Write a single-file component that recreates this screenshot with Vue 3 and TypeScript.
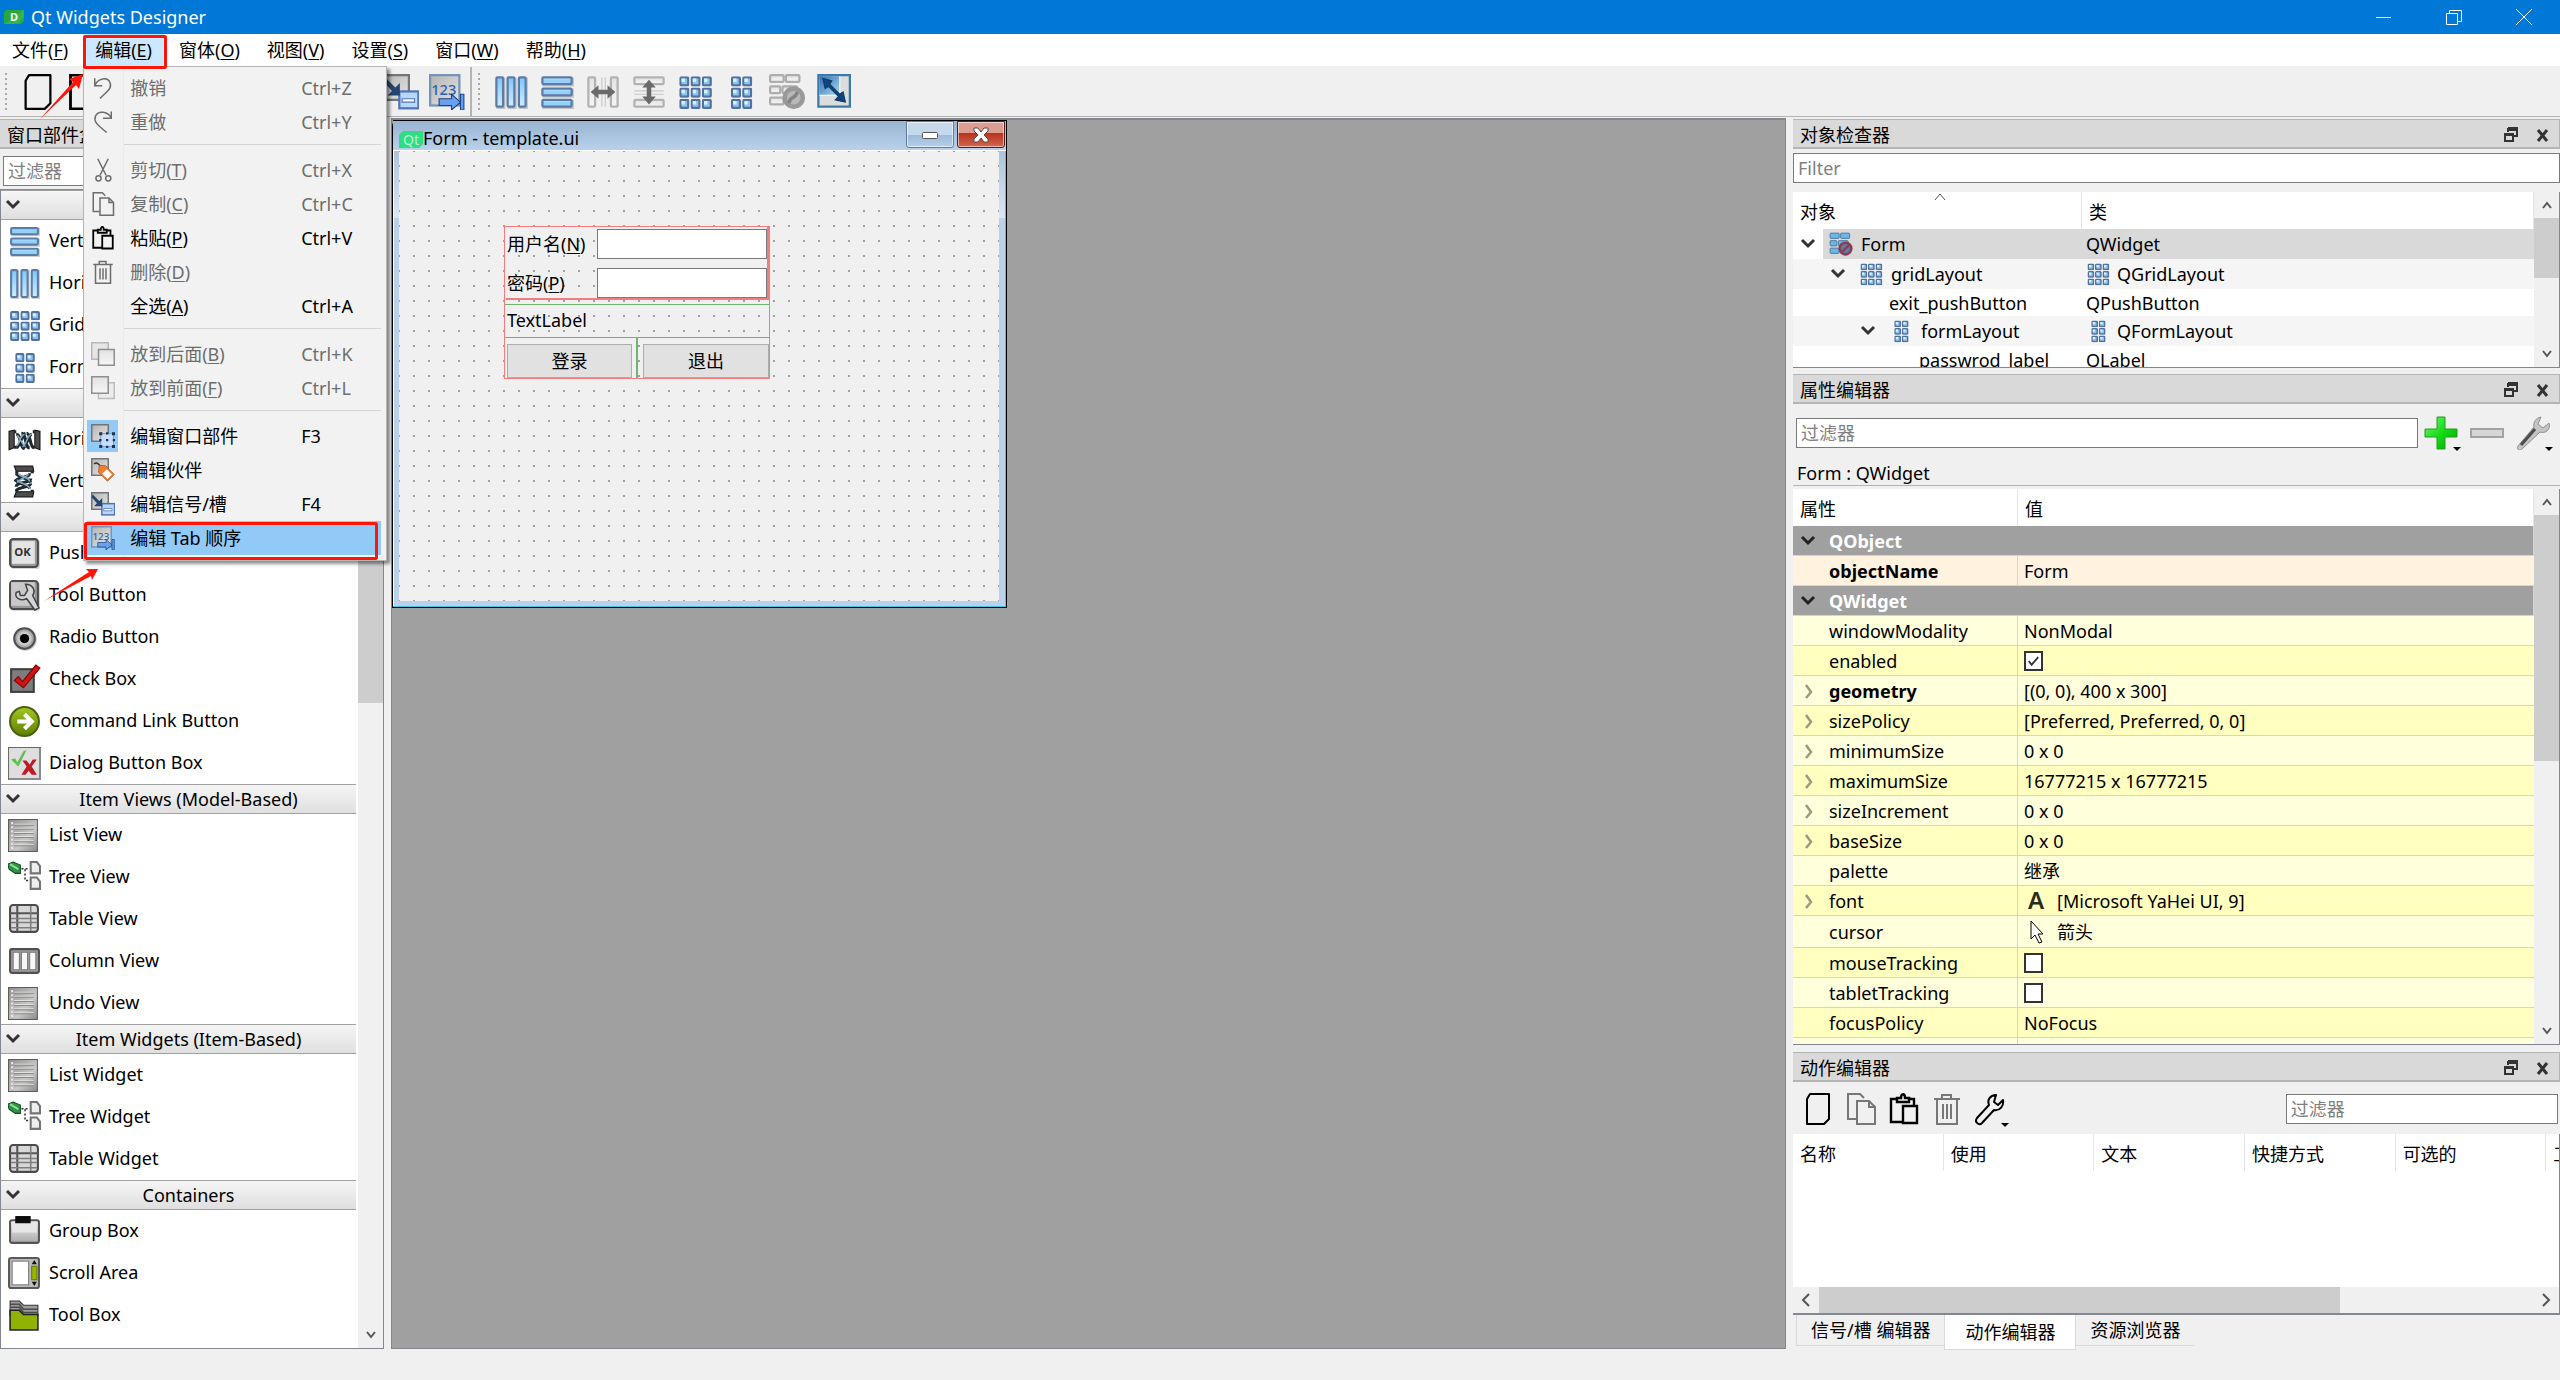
<script setup lang="ts">
import { ref } from 'vue'

interface MenuEntry {
  text?: string
  key?: string
  shortcut?: string
  icon?: string
  disabled?: boolean
  checked?: boolean
  active?: boolean
  separator?: boolean
}

interface Property {
  name: string
  value?: string
  kind?: 'group' | 'check'
  on?: boolean
  bold?: boolean
  expandable?: boolean
  icon?: string
  tone: string
}

const menus = [
  { text: '文件', key: 'F' },
  { text: '编辑', key: 'E' },
  { text: '窗体', key: 'O' },
  { text: '视图', key: 'V' },
  { text: '设置', key: 'S' },
  { text: '窗口', key: 'W' },
  { text: '帮助', key: 'H' },
]

const editMenu: MenuEntry[] = [
  { text: '撤销', shortcut: 'Ctrl+Z', icon: 'undo', disabled: true },
  { text: '重做', shortcut: 'Ctrl+Y', icon: 'redo', disabled: true },
  { separator: true },
  { text: '剪切', key: 'T', shortcut: 'Ctrl+X', icon: 'cut', disabled: true },
  { text: '复制', key: 'C', shortcut: 'Ctrl+C', icon: 'copy', disabled: true },
  { text: '粘贴', key: 'P', shortcut: 'Ctrl+V', icon: 'paste' },
  { text: '删除', key: 'D', icon: 'trash', disabled: true },
  { text: '全选', key: 'A', shortcut: 'Ctrl+A' },
  { separator: true },
  { text: '放到后面', key: 'B', shortcut: 'Ctrl+K', icon: 'toback', disabled: true },
  { text: '放到前面', key: 'F', shortcut: 'Ctrl+L', icon: 'tofront', disabled: true },
  { separator: true },
  { text: '编辑窗口部件', shortcut: 'F3', icon: 'widgets', checked: true },
  { text: '编辑伙伴', icon: 'buddy' },
  { text: '编辑信号/槽', shortcut: 'F4', icon: 'signal' },
  { text: '编辑 Tab 顺序', icon: 'taborder', active: true },
]

const layoutTools = ['hlay', 'vlay', 'hsplit', 'vsplit', 'grid', 'form', 'breaklay', 'adjust']

const widgetBox = [
  {
    title: 'Layouts',
    items: [
      ['Vertical Layout', 'vlay'],
      ['Horizontal Layout', 'hlay'],
      ['Grid Layout', 'grid'],
      ['Form Layout', 'form'],
    ],
  },
  {
    title: 'Spacers',
    items: [
      ['Horizontal Spacer', 'hspacer'],
      ['Vertical Spacer', 'vspacer'],
    ],
  },
  {
    title: 'Buttons',
    items: [
      ['Push Button', 'push'],
      ['Tool Button', 'tool'],
      ['Radio Button', 'radio'],
      ['Check Box', 'check'],
      ['Command Link Button', 'command'],
      ['Dialog Button Box', 'dialog'],
    ],
  },
  {
    title: 'Item Views (Model-Based)',
    items: [
      ['List View', 'list'],
      ['Tree View', 'tree'],
      ['Table View', 'table'],
      ['Column View', 'column'],
      ['Undo View', 'list'],
    ],
  },
  {
    title: 'Item Widgets (Item-Based)',
    items: [
      ['List Widget', 'list'],
      ['Tree Widget', 'tree'],
      ['Table Widget', 'table'],
    ],
  },
  {
    title: 'Containers',
    items: [
      ['Group Box', 'group'],
      ['Scroll Area', 'scrollarea'],
      ['Tool Box', 'toolbox'],
    ],
  },
]

const objects = [
  { name: 'Form', cls: 'QWidget', depth: 0, open: true, icon: 'breaklay-color', selected: true },
  { name: 'gridLayout', cls: 'QGridLayout', depth: 1, open: true, icon: 'grid', clsIcon: 'grid' },
  { name: 'exit_pushButton', cls: 'QPushButton', depth: 2 },
  { name: 'formLayout', cls: 'QFormLayout', depth: 2, open: true, icon: 'form', clsIcon: 'form' },
  { name: 'passwrod_label', cls: 'QLabel', depth: 3 },
]

const properties: Property[] = [
  { name: 'QObject', kind: 'group', tone: 'group' },
  { name: 'objectName', value: 'Form', bold: true, tone: 'peach' },
  { name: 'QWidget', kind: 'group', tone: 'group' },
  { name: 'windowModality', value: 'NonModal', tone: 'light' },
  { name: 'enabled', kind: 'check', on: true, tone: 'deep' },
  { name: 'geometry', value: '[(0, 0), 400 x 300]', bold: true, expandable: true, tone: 'light' },
  { name: 'sizePolicy', value: '[Preferred, Preferred, 0, 0]', expandable: true, tone: 'deep' },
  { name: 'minimumSize', value: '0 x 0', expandable: true, tone: 'light' },
  { name: 'maximumSize', value: '16777215 x 16777215', expandable: true, tone: 'deep' },
  { name: 'sizeIncrement', value: '0 x 0', expandable: true, tone: 'light' },
  { name: 'baseSize', value: '0 x 0', expandable: true, tone: 'deep' },
  { name: 'palette', value: '继承', tone: 'light' },
  { name: 'font', value: '[Microsoft YaHei UI, 9]', expandable: true, icon: 'fontglyph', tone: 'deep' },
  { name: 'cursor', value: '箭头', icon: 'pointer', tone: 'light' },
  { name: 'mouseTracking', kind: 'check', on: false, tone: 'deep' },
  { name: 'tabletTracking', kind: 'check', on: false, tone: 'light' },
  { name: 'focusPolicy', value: 'NoFocus', tone: 'deep' },
]

const actionColumns = ['名称', '使用', '文本', '快捷方式', '可选的', '工具提示']
const tabs = ['信号/槽 编辑器', '动作编辑器', '资源浏览器']
const currentTab = ref(1)
</script>

<template>
  <div class="app">
    <svg class="sprite" width="0" height="0" aria-hidden="true">
      <defs>
        <linearGradient id="g-blue" x1="0" y1="0" x2="0" y2="1">
          <stop offset="0" stop-color="#dff4ff" /><stop offset="0.4" stop-color="#8ed2fa" /><stop offset="1" stop-color="#a4cdf0" />
        </linearGradient>
        <linearGradient id="g-blue-h" x1="0" y1="0" x2="0" y2="1">
          <stop offset="0" stop-color="#7cc8fa" /><stop offset="1" stop-color="#d2ecfd" />
        </linearGradient>
        <linearGradient id="g-grey" x1="0" y1="0" x2="0" y2="1">
          <stop offset="0" stop-color="#f4f4f4" /><stop offset="1" stop-color="#a9a9a9" />
        </linearGradient>
        <linearGradient id="g-pale" x1="0" y1="0" x2="0" y2="1">
          <stop offset="0" stop-color="#e2e2e2" /><stop offset="1" stop-color="#f6f6f6" />
        </linearGradient>
        <linearGradient id="g-panel" x1="0" y1="0" x2="1" y2="1">
          <stop offset="0" stop-color="#b4b4b4" /><stop offset="1" stop-color="#e6e6e6" />
        </linearGradient>
        <linearGradient id="g-list" x1="0" y1="0" x2="1" y2="1">
          <stop offset="0" stop-color="#8f8f8f" /><stop offset="0.6" stop-color="#c8c8c6" /><stop offset="1" stop-color="#8a8a88" />
        </linearGradient>
        <linearGradient id="g-green" x1="0" y1="0" x2="0" y2="1">
          <stop offset="0" stop-color="#a4c520" /><stop offset="1" stop-color="#5f7f00" />
        </linearGradient>
        <linearGradient id="g-plus" x1="0" y1="0" x2="1" y2="1">
          <stop offset="0" stop-color="#7df57d" /><stop offset="0.5" stop-color="#15dc15" /><stop offset="1" stop-color="#00a800" />
        </linearGradient>
        <linearGradient id="g-adjust" x1="0" y1="0" x2="1" y2="1">
          <stop offset="0" stop-color="#2f6fb4" /><stop offset="1" stop-color="#a7dcf3" />
        </linearGradient>
      </defs>

      <symbol id="vlay" viewBox="0 0 32 32">
        <path d="M3 3h28v8H3zM3 13h28v8H3zM3 23h28v8H3z" fill="#00000030" />
        <g fill="url(#g-blue)" stroke="#5b7ba8" stroke-width="2">
          <rect x="3" y="3" width="26" height="6" rx="1" /><rect x="3" y="13" width="26" height="6" rx="1" /><rect x="3" y="23" width="26" height="6" rx="1" />
        </g>
      </symbol>
      <symbol id="hlay" viewBox="0 0 32 32">
        <path d="M3 3h8v28H3zM13 3h8v28h-8zM23 3h8v28h-8z" fill="#00000030" />
        <g fill="url(#g-blue-h)" stroke="#5b7ba8" stroke-width="2">
          <rect x="3" y="3" width="6" height="26" rx="1" /><rect x="13" y="3" width="6" height="26" rx="1" /><rect x="23" y="3" width="6" height="26" rx="1" />
        </g>
      </symbol>
      <symbol id="cell" viewBox="0 0 9 9">
        <rect x="1" y="1" width="8" height="8" fill="#00000030" /><rect x="1" y="1" width="7" height="7" rx="1" fill="#8cc4ee" stroke="#52719f" stroke-width="2" /><path d="M2 2h3v3H2z" fill="#d4f1fd" />
      </symbol>
      <symbol id="grid" viewBox="0 0 32 32">
        <use v-for="n in 9" :key="n" href="#cell" :x="2 + ((n - 1) % 3) * 10" :y="2 + Math.floor((n - 1) / 3) * 10" width="9" height="9" />
      </symbol>
      <symbol id="form" viewBox="0 0 32 32">
        <use v-for="n in 6" :key="n" href="#cell" :x="7 + ((n - 1) % 2) * 10" :y="2 + Math.floor((n - 1) / 2) * 10" width="9" height="9" />
      </symbol>
      <symbol id="hsplit" viewBox="0 0 32 32">
        <g fill="url(#g-pale)" stroke="#b2b2b2" stroke-width="2"><rect x="3" y="3" width="6" height="26" rx="1" /><rect x="23" y="3" width="6" height="26" rx="1" /></g>
        <path d="M15 3v26M18 3v26" stroke="#c6c6c6" /><path d="M5 16l7-6v4h8v-4l7 6-7 6v-4h-8v4z" fill="#6a6a6a" />
      </symbol>
      <symbol id="vsplit" viewBox="0 0 32 32">
        <g fill="url(#g-pale)" stroke="#b2b2b2" stroke-width="2"><rect x="3" y="3" width="26" height="6" rx="1" /><rect x="3" y="23" width="26" height="6" rx="1" /></g>
        <path d="M3 15h26M3 18h26" stroke="#c6c6c6" /><path d="M16 5l6 7h-4v8h4l-6 7-6-7h4v-8h-4z" fill="#6a6a6a" />
      </symbol>
      <symbol id="breaklay" viewBox="0 0 32 32">
        <g fill="url(#g-pale)" stroke="#adadad" stroke-width="2">
          <rect x="1" y="1" width="12" height="6" rx="1" /><rect x="15" y="1" width="12" height="6" rx="1" />
          <rect x="1" y="11" width="9" height="6" rx="1" /><rect x="12" y="11" width="13" height="6" rx="1" /><rect x="1" y="21" width="12" height="6" rx="1" />
        </g>
        <circle cx="22" cy="21" r="10" fill="#999" /><circle cx="22" cy="21" r="6" fill="#b8b8b8" /><path d="M18 26c0-7 6-3 7-10" stroke="#848484" stroke-width="3" fill="none" />
      </symbol>
      <symbol id="breaklay-color" viewBox="0 0 32 32">
        <g fill="#6cb6e8" stroke="#35628f">
          <rect x="1.500" y="1.500" width="12" height="7" rx="1" /><rect x="15.500" y="1.500" width="12" height="7" rx="1" />
          <rect x="1.500" y="11.500" width="9" height="7" rx="1" /><rect x="12.500" y="11.500" width="13" height="7" rx="1" /><rect x="1.500" y="21.500" width="12" height="7" rx="1" />
        </g>
        <circle cx="22" cy="22" r="9.500" fill="#843f55" /><circle cx="22" cy="22" r="6" fill="#5f7ca5" /><path d="M17 27l10-10" stroke="#843f55" stroke-width="3" />
      </symbol>
      <symbol id="adjust" viewBox="0 0 32 32">
        <rect x="3" y="1" width="28" height="28" fill="#dcdcdc" stroke="#3a78b0" stroke-width="2" /><path d="M4 2h18v17H4z" fill="url(#g-adjust)" /><path d="M22 2v17H4" fill="none" stroke="#f6f6f6" />
        <path d="M7 4l8 2-2 3 9 9 3-2 2 9-9-2 3-3-9-9-3 2z" fill="#114478" stroke="#0d3a68" />
      </symbol>

      <symbol id="page" viewBox="0 0 32 32"><path d="M8 1h19v25l-5 5H5V6z" fill="none" stroke="currentColor" stroke-width="2" stroke-linejoin="round" /></symbol>
      <symbol id="openfile" viewBox="0 0 32 32"><path d="M4 1h16l8 8v22H4zM20 1v8h8" fill="none" stroke="currentColor" stroke-width="2.500" /></symbol>
      <symbol id="undo" viewBox="0 0 32 32"><path d="M5 3v10h10M5 13C9 3 22 1 25 8c4 8-3 12-13 22" fill="none" stroke="currentColor" stroke-width="2" /></symbol>
      <symbol id="redo" viewBox="0 0 32 32"><path d="M27 2v9H16M27 11C23 2 10 0 6 8c-3 8 3 12 15 22" fill="none" stroke="currentColor" stroke-width="2" /></symbol>
      <symbol id="cut" viewBox="0 0 32 32"><path d="M9 1l11 22M23 1L12 23" fill="none" stroke="currentColor" stroke-width="2" /><circle cx="10" cy="27" r="3.500" fill="none" stroke="currentColor" stroke-width="2" /><circle cx="23" cy="27" r="3.500" fill="none" stroke="currentColor" stroke-width="2" /></symbol>
      <symbol id="copy" viewBox="0 0 32 32"><path d="M12 26H3V1h12l4 4M12 8h12l6 6v17H12zM24 8v6h6" fill="none" stroke="currentColor" stroke-width="2" /></symbol>
      <symbol id="paste" viewBox="0 0 32 32"><path d="M15 29H3V6h6M20 6h6v6M9 5h4c0-5 4-5 4 0h4v4H9zM15 13h14v17H15z" fill="none" stroke="currentColor" stroke-width="2.400" /></symbol>
      <symbol id="trash" viewBox="0 0 32 32"><path d="M3 6h26M11 6V2h9v4M6 7v24h20V7M12 11v15M16 11v15M20 11v15" fill="none" stroke="currentColor" stroke-width="2" /></symbol>
      <symbol id="wrench" viewBox="0 0 32 32"><path d="M22 2c-6 0-9 5-7 10L3 25c-3 4 2 8 5 5l12-13c6 1 10-4 9-10l-5 5-4-3z" fill="none" stroke="currentColor" stroke-width="2" stroke-linejoin="round" /></symbol>
      <symbol id="toback" viewBox="0 0 32 32"><rect x="1" y="1" width="22" height="22" fill="#e6e6e6" stroke="#b8b8b8" stroke-width="2" /><rect x="10" y="10" width="21" height="21" fill="url(#g-pale)" stroke="#8f8f8f" stroke-width="2" /></symbol>
      <symbol id="tofront" viewBox="0 0 32 32"><rect x="10" y="9" width="21" height="21" fill="#ececec" stroke="#bdbdbd" stroke-width="2" /><rect x="1" y="1" width="22" height="22" fill="url(#g-pale)" stroke="#8f8f8f" stroke-width="2" /></symbol>
      <symbol id="widgets" viewBox="0 0 32 32">
        <rect x="1" y="1" width="22" height="22" fill="url(#g-panel)" stroke="#747474" stroke-width="2" /><rect x="13" y="13" width="17" height="17" fill="#c3dcff" stroke="#6d88b8" />
        <path d="M11 11h4v4h-4zM20 11h3v3h-3zM28 11h4v4h-4zM11 20h3v3h-3zM20 20h3v3h-3zM29 20h3v3h-3zM11 28h4v4h-4zM20 29h3v3h-3zM28 28h4v4h-4z" fill="#1d3350" />
      </symbol>
      <symbol id="buddy" viewBox="0 0 32 32">
        <rect x="1" y="1" width="22" height="22" fill="url(#g-panel)" stroke="#747474" stroke-width="2" /><path d="M4 8c4-3 7 0 9 4" fill="none" stroke="#333" stroke-width="2" />
        <path d="M11 10h8l12 12-9 9-12-12z" fill="#ef7f31" stroke="#a65218" /><path d="M21 15l7 7-6 6-7-7z" fill="#fff" />
      </symbol>
      <symbol id="signal" viewBox="0 0 32 32">
        <rect x="1" y="1" width="22" height="22" fill="url(#g-panel)" stroke="#747474" stroke-width="2" /><rect x="14.500" y="15.500" width="17" height="15" fill="#b9d6fb" stroke="#4f75b4" stroke-width="2" /><path d="M17 22h11v3H17z" fill="#fff" stroke="#4f75b4" />
        <path d="M2 3l9 9 4-4v11H4l4-4-7-8z" fill="#27466f" />
      </symbol>
      <symbol id="taborder" viewBox="0 0 32 32">
        <rect x="1" y="1" width="26" height="27" fill="url(#g-panel)" stroke="#7793b5" stroke-width="2" /><text x="2" y="19" font-size="13" font-weight="500" fill="#2c62b4">123</text>
        <path d="M9 22h11v-4l8 7-8 7v-4H9zM28 18h3v14h-3z" fill="#6da0ea" stroke="#1c4488" />
      </symbol>
      <symbol id="save" viewBox="0 0 32 32"><path d="M3 2h22l5 5v23H3zM9 2v9h12V2M8 30V18h16v12" fill="none" stroke="currentColor" stroke-width="2" /></symbol>

      <symbol id="hspacer" viewBox="0 0 32 32">
        <path d="M8 11c5 0 3 13 8 14M13 10c5 0 3 14 8 14M18 10c4 0 3 13 7 14M8 24c4-1 5-13 9-14M14 25c4-1 5-13 9-14" stroke="#1d2830" stroke-width="3" fill="none" /><path d="M8 22c4-1 3-10 8-11M14 23c4-1 4-11 9-12M9 12c3 3 5 9 8 11" stroke="#86abc0" stroke-width="1.500" fill="none" />
        <path d="M1 8l5-1v17l-5 2zM31 8l-5-1v17l5 2z" fill="#4c4c4c" stroke="#111" /><path d="M6 7h2v3H6zM6 22h2v3H6zM24 7h2v3h-2zM24 22h2v3h-2z" fill="#222" />
      </symbol>
      <symbol id="vspacer" viewBox="0 0 32 32"><use href="#hspacer" width="32" height="32" transform="rotate(90 16 16)" /></symbol>
      <symbol id="push" viewBox="0 0 32 32"><rect x="3" y="3" width="28" height="28" rx="3" fill="#00000028" /><rect x="2" y="2" width="27" height="27" rx="3" fill="#9a9a9a" stroke="#4c4c4c" stroke-width="2" /><rect x="4" y="4" width="22" height="22" fill="#e4e4e4" /><text x="6" y="18" font-size="11" font-weight="bold" fill="#333">OK</text></symbol>
      <symbol id="tool" viewBox="0 0 32 32">
        <rect x="3" y="3" width="28" height="28" rx="3" fill="#00000028" /><rect x="2" y="2" width="27" height="27" rx="3" fill="#9a9a9a" stroke="#4c4c4c" stroke-width="2" /><rect x="3" y="3" width="23" height="23" fill="#c9c9c9" />
        <path d="M17 5c7 0 10 6 7 11l6 12-4 2-8-11C12 22 6 18 8 13l3-1 1 4 4 0 3-5z" fill="#d4d4da" stroke="#444" stroke-width="1.500" />
      </symbol>
      <symbol id="radio" viewBox="0 0 32 32"><circle cx="17" cy="18" r="11" fill="#00000030" /><circle cx="16" cy="17" r="10" fill="#a9a9a9" stroke="#505050" stroke-width="2" /><circle cx="16" cy="17" r="7" fill="#c9c9c9" /><circle cx="16" cy="17" r="4.500" fill="#000" /></symbol>
      <symbol id="check" viewBox="0 0 32 32"><rect x="3" y="6" width="22" height="22" fill="#7d7d7d" stroke="#3e3e3e" stroke-width="2" /><path d="M6 17l4-4 4 5L27 2l4 3-16 19z" fill="#cf1414" stroke="#7c0505" /></symbol>
      <symbol id="command" viewBox="0 0 32 32"><circle cx="16" cy="16" r="14" fill="url(#g-green)" stroke="#4b6112" stroke-width="2" /><path d="M9 16h13M16 9l7 7-7 7" fill="none" stroke="#fff" stroke-width="4" /></symbol>
      <symbol id="dialog" viewBox="0 0 32 32"><rect x="0.500" y="0.500" width="31" height="31" fill="#dedede" stroke="#6b6b6b" /><path d="M1 31h30V1" fill="none" stroke="#8b8b8b" stroke-width="2" /><path d="M3 12l4-1 2 4 6-11 3-1-8 16z" fill="#5fc04c" /><path d="M14 13h4l3 4 3-5h4l-5 7 5 8h-5l-3-4-3 4h-4l5-8z" fill="#c01c28" /></symbol>
      <symbol id="list" viewBox="0 0 32 32">
        <rect x="0.500" y="0.500" width="28" height="31" fill="url(#g-list)" stroke="#5c5c5c" />
        <path d="M6 5h19M6 9h19M6 13h19M6 17h19M6 21h19M6 25h19" stroke="#e2e2e0" /><path d="M6 6h19M6 10h19M6 14h19M6 18h19M6 22h19M6 26h19" stroke="#8a8a8a" /><path d="M4 3v26" stroke="#e6e6e6" stroke-width="2" stroke-dasharray="2 2" />
      </symbol>
      <symbol id="tree" viewBox="0 0 32 32">
        <path d="M0 3l5-2 7 3v8l-5 0-6-4z" fill="#2f9440" stroke="#0e4b1c" /><path d="M2 3l8 5" stroke="#8fdc9a" stroke-width="2" />
        <path d="M13 7.500h8M16.500 8v11h5" stroke="#333" stroke-width="1.500" stroke-dasharray="2 2" fill="none" />
        <g fill="#eee" stroke="#747474" stroke-width="2"><path d="M22 1h6l3 4v7h-9zM22 16h6l3 4v7h-9z" /></g>
      </symbol>
      <symbol id="table" viewBox="0 0 32 32"><rect x="2" y="2" width="27" height="26" rx="3" fill="#d8d8d8" stroke="#4a4a4a" stroke-width="2" /><path d="M2 10h27M9 2v26" stroke="#555" stroke-width="2" /><path d="M3 15h25M3 19h25M3 24h25M22 3v24" stroke="#7d7d7d" stroke-width="1.500" /></symbol>
      <symbol id="column" viewBox="0 0 32 32"><rect x="2" y="4" width="28" height="23" rx="2" fill="#9e9e9e" stroke="#4f4f4f" stroke-width="2" /><path d="M5 7h6v17H5zM13 7h6v17h-6zM21 7h6v17h-6z" fill="#f7f7f7" stroke="#777" /></symbol>
      <symbol id="group" viewBox="0 0 32 32"><rect x="2" y="5" width="28" height="22" rx="2" fill="url(#g-grey)" stroke="#555" stroke-width="2" /><path d="M4 7h24v10H4z" fill="#e6e6e6" /><path d="M7 1h15v7H7z" fill="#0c0c0c" /></symbol>
      <symbol id="scrollarea" viewBox="0 0 32 32"><rect x="1" y="1" width="29" height="29" rx="2" fill="#bdbdbd" stroke="#595959" stroke-width="2" /><rect x="4" y="4" width="16" height="23" fill="#fff" stroke="#777" /><path d="M23 9h5v13h-5z" fill="#93b800" stroke="#5d7600" /><path d="M23 7l2.500-4L28 7zM23 24l2.500 4 2.500-4z" fill="#111" /></symbol>
      <symbol id="toolbox" viewBox="0 0 32 32"><path d="M2 2h9l4 4h14v10H2z" fill="#9d9d9d" stroke="#333" /><path d="M2 5h9l4 5h14M2 8h9l4 5h14" fill="none" stroke="#4a4a4a" stroke-width="1.500" /><path d="M2 11h9l4 4h14v15H2z" fill="#8fb300" stroke="#222" stroke-width="1.500" /></symbol>

      <symbol id="fontglyph" viewBox="0 0 24 24"><text x="4" y="20" font-size="24" font-weight="600" fill="#2b2b1c">A</text></symbol>
      <symbol id="pointer" viewBox="0 0 24 24"><path d="M7 1v18l4-4 4 8 3-1-4-8h5z" fill="#fff" stroke="#000" /></symbol>
      <symbol id="plus" viewBox="0 0 34 34"><path d="M13 1h8v12h12v8H21v12h-8V21H1v-8h12z" fill="url(#g-plus)" stroke="#1f9f1f" /></symbol>
      <symbol id="minus" viewBox="0 0 34 34"><rect x="1" y="13" width="32" height="8" fill="#d6d6d6" stroke="#a3a3a3" stroke-width="2" /></symbol>
      <symbol id="spanner" viewBox="0 0 34 34"><path d="M25 1l-3 7 5 4 6-5c2 6-3 11-9 9L6 33c-2 3-6 0-4-3L18 11c-1-5 2-9 7-10z" fill="#c4c4c4" stroke="#8f8f8f" /><path d="M5 29l14-16" stroke="#4c4c4c" stroke-width="3" /></symbol>
      <symbol id="chev-down" viewBox="0 0 16 16"><path d="M2 4l6 6 6-6" fill="none" stroke="currentColor" stroke-width="3" /></symbol>
      <symbol id="chev-right" viewBox="0 0 16 16"><path d="M6 2l5 7-5 6" fill="none" stroke="currentColor" stroke-width="2.500" /></symbol>
      <symbol id="arrow-down" viewBox="0 0 16 16"><path d="M4 5l4 5 4-5" fill="none" stroke="currentColor" stroke-width="2" /></symbol>
      <symbol id="arrow-up" viewBox="0 0 16 16"><path d="M4 11l4-5 4 5" fill="none" stroke="currentColor" stroke-width="2" /></symbol>
      <symbol id="arrow-left" viewBox="0 0 16 16"><path d="M11 2L5 8l6 6" fill="none" stroke="currentColor" stroke-width="2" /></symbol>
      <symbol id="arrow-right" viewBox="0 0 16 16"><path d="M5 2l6 6-6 6" fill="none" stroke="currentColor" stroke-width="2" /></symbol>
      <symbol id="float" viewBox="0 0 16 16"><path d="M5 1h9v8h-4M5 1v4M5 3h9" fill="none" stroke="#333" stroke-width="2" /><path d="M2 7h8v7H2zM2 8h8" fill="none" stroke="#333" stroke-width="2" /></symbol>
      <symbol id="close" viewBox="0 0 16 16"><path d="M3 3l9 11M12 3L3 14" stroke="#333" stroke-width="3" /></symbol>
    </svg>

    <header class="titlebar">
      <svg class="logo" viewBox="0 0 20 14"><path d="M2 0h18v11l-3 3H0V3z" fill="#26a83c" /><path d="M20 0v7l-6 7H0z" fill="#3fc455" opacity="0.500" /><text x="6" y="11" font-size="11" font-weight="bold" fill="#fff">D</text></svg>
      <h1>Qt Widgets Designer</h1>
      <div class="window-buttons">
        <button type="button" aria-label="最小化"><svg viewBox="0 0 16 16"><path d="M0 8.500h15" stroke="#fff" /></svg></button>
        <button type="button" aria-label="还原"><svg viewBox="0 0 16 16"><path d="M.5 4.500h11v11H.5zM3.500 4V1.500h12v11H12" fill="none" stroke="#fff" /></svg></button>
        <button type="button" aria-label="关闭"><svg viewBox="0 0 16 16"><path d="M0 0l16 16M16 0L0 16" stroke="#fff" /></svg></button>
      </div>
    </header>

    <nav class="menubar">
      <div v-for="m in menus" :key="m.key" class="menu-slot">
        <button type="button" class="menu-title" :class="{ open: m.key === 'E' }">{{ m.text }}(<u>{{ m.key }}</u>)</button>
        <div v-if="m.key === 'E'" class="menu">
          <template v-for="(e, i) in editMenu" :key="i">
            <hr v-if="e.separator" />
            <button v-else type="button" class="entry" :class="{ active: e.active }" :disabled="e.disabled">
              <span class="entry-icon" :class="{ checked: e.checked }"><svg v-if="e.icon"><use :href="'#' + e.icon" /></svg></span>
              <span class="entry-text">{{ e.text }}<template v-if="e.key">(<u>{{ e.key }}</u>)</template></span>
              <span class="entry-key">{{ e.shortcut }}</span>
            </button>
          </template>
        </div>
      </div>
    </nav>

    <div class="toolbars">
      <div class="toolbar file-tools">
        <i class="handle"></i>
        <button type="button" aria-label="新建"><svg><use href="#page" /></svg></button>
        <button type="button" aria-label="打开"><svg><use href="#openfile" /></svg></button>
        <button type="button" aria-label="保存"><svg><use href="#save" /></svg></button>
        <span class="push-right"></span>
        <button type="button" aria-label="编辑信号/槽"><svg><use href="#signal" /></svg></button>
        <button type="button" aria-label="编辑 Tab 顺序"><svg><use href="#taborder" /></svg></button>
      </div>
      <div class="toolbar layout-tools">
        <i class="handle"></i>
        <button v-for="t in layoutTools" :key="t" type="button" :aria-label="t"><svg><use :href="'#' + t" /></svg></button>
      </div>
    </div>

    <main class="workspace">
      <aside class="left">
        <div class="dock-title"><h2>窗口部件盒</h2></div>
        <input class="field box-filter" type="text" placeholder="过滤器" aria-label="过滤窗口部件" />
        <div class="box">
          <div class="box-list">
            <section v-for="g in widgetBox" :key="g.title">
              <h3><svg class="chev"><use href="#chev-down" /></svg><span>{{ g.title }}</span></h3>
              <div v-for="it in g.items" :key="it[0]" class="box-item"><svg><use :href="'#' + it[1]" /></svg><span>{{ it[0] }}</span></div>
            </section>
          </div>
          <div class="vscroll">
            <svg><use href="#arrow-up" /></svg>
            <div class="track"><div class="thumb" style="height: 44%"></div></div>
            <svg><use href="#arrow-down" /></svg>
          </div>
        </div>
      </aside>

      <section class="mdi">
        <div class="child">
          <div class="child-title">
            <svg class="qt" viewBox="0 0 24 17"><path d="M4 0h20v13l-4 4H0V4z" fill="#2cde85" /><text x="4" y="14" font-size="14" fill="#bfeed6">Qt</text></svg>
            <span class="child-name">Form - template.ui</span>
            <button type="button" class="child-min" aria-label="最小化子窗口"><svg viewBox="0 0 18 18"><rect x="1.500" y="6.500" width="15" height="6" rx="1" fill="#fff" stroke="#555" /></svg></button>
            <button type="button" class="child-close" aria-label="关闭子窗口"><svg viewBox="0 0 18 18"><path d="M2 2h4l3 4 3-4h4v3l-4 4 4 4v3h-4l-3-4-3 4H2v-3l4-4-4-4z" fill="#fff" stroke="#5c4a4a" /></svg></button>
          </div>
          <div class="canvas">
            <form class="grid-layout" @submit.prevent>
              <div class="form-layout">
                <label for="user">用户名(<u>N</u>)</label><input id="user" type="text" />
                <label for="pass">密码(<u>P</u>)</label><input id="pass" type="password" />
              </div>
              <div class="text-label">TextLabel</div>
              <div class="form-buttons">
                <div><button type="button">登录</button></div>
                <div><button type="button">退出</button></div>
              </div>
            </form>
          </div>
        </div>
      </section>

      <aside class="right">
        <section class="inspector">
          <div class="dock-title"><h2>对象检查器</h2><button type="button" aria-label="浮动"><svg><use href="#float" /></svg></button><button type="button" aria-label="关闭"><svg><use href="#close" /></svg></button></div>
          <input class="field object-filter" type="text" placeholder="Filter" aria-label="过滤对象" />
          <div class="view">
            <div class="view-body">
              <table class="objects">
                <colgroup><col class="col-object" /><col /></colgroup>
                <thead><tr><th><svg class="sort" viewBox="0 0 12 8"><path d="M1 7l5-6 5 6" fill="none" stroke="#555" /></svg>对象</th><th>类</th></tr></thead>
                <tbody>
                  <tr v-for="o in objects" :key="o.name" :class="{ selected: o.selected, short: !o.icon }">
                    <td>
                      <div class="node">
                        <span v-for="d in o.depth" :key="d" class="indent"></span>
                        <span class="twist"><svg v-if="o.open"><use href="#chev-down" /></svg></span>
                        <span class="node-body"><svg v-if="o.icon"><use :href="'#' + o.icon" /></svg>{{ o.name }}</span>
                      </div>
                    </td>
                    <td><div class="node-class"><svg v-if="o.clsIcon"><use :href="'#' + o.clsIcon" /></svg>{{ o.cls }}</div></td>
                  </tr>
                </tbody>
              </table>
            </div>
            <div class="vscroll">
              <svg><use href="#arrow-up" /></svg>
              <div class="track"><div class="thumb" style="height: 49%"></div></div>
              <svg><use href="#arrow-down" /></svg>
            </div>
          </div>
        </section>

        <section class="editor">
          <div class="dock-title"><h2>属性编辑器</h2><button type="button" aria-label="浮动"><svg><use href="#float" /></svg></button><button type="button" aria-label="关闭"><svg><use href="#close" /></svg></button></div>
          <div class="prop-tools">
            <input class="field" type="text" placeholder="过滤器" aria-label="过滤属性" />
            <button type="button" class="drop" aria-label="添加动态属性"><svg><use href="#plus" /></svg></button>
            <button type="button" aria-label="删除动态属性"><svg><use href="#minus" /></svg></button>
            <button type="button" class="drop" aria-label="配置属性编辑器"><svg><use href="#spanner" /></svg></button>
          </div>
          <div class="target">Form : QWidget</div>
          <div class="view">
            <div class="view-body">
              <table class="props">
                <colgroup><col class="col-prop" /><col /></colgroup>
                <thead><tr><th>属性</th><th>值</th></tr></thead>
                <tbody>
                  <tr v-for="p in properties" :key="p.name" :class="[p.tone, { tall: p.name === 'cursor' }]">
                    <td :class="{ bold: p.bold }" :colspan="p.kind === 'group' ? 2 : 1">
                      <div class="prop-name">
                        <svg v-if="p.kind === 'group'"><use href="#chev-down" /></svg>
                        <svg v-else-if="p.expandable"><use href="#chev-right" /></svg>
                        <i v-else></i>
                        <label v-if="p.kind === 'check'" :for="'prop-' + p.name">{{ p.name }}</label>
                        <span v-else>{{ p.name }}</span>
                      </div>
                    </td>
                    <td v-if="p.kind !== 'group'">
                      <div class="prop-value">
                        <span v-if="p.kind === 'check'" class="tick">
                          <input :id="'prop-' + p.name" type="checkbox" :checked="p.on" />
                          <svg viewBox="0 0 20 20"><path d="M5 10l3 4 7-8" fill="none" stroke="#333" stroke-width="2" /></svg>
                        </span>
                        <svg v-if="p.icon" class="value-icon"><use :href="'#' + p.icon" /></svg>
                        {{ p.value }}
                      </div>
                    </td>
                  </tr>
                  <tr class="light" aria-hidden="true"><td></td><td></td></tr>
                </tbody>
              </table>
            </div>
            <div class="vscroll">
              <svg><use href="#arrow-up" /></svg>
              <div class="track"><div class="thumb" style="height: 49%"></div></div>
              <svg><use href="#arrow-down" /></svg>
            </div>
          </div>
        </section>

        <section class="actions">
          <div class="dock-title"><h2>动作编辑器</h2><button type="button" aria-label="浮动"><svg><use href="#float" /></svg></button><button type="button" aria-label="关闭"><svg><use href="#close" /></svg></button></div>
          <div class="action-tools">
            <button type="button" aria-label="新建动作"><svg><use href="#page" /></svg></button>
            <button type="button" class="dim" aria-label="复制动作"><svg><use href="#copy" /></svg></button>
            <button type="button" aria-label="粘贴动作"><svg><use href="#paste" /></svg></button>
            <button type="button" class="dim" aria-label="删除动作"><svg><use href="#trash" /></svg></button>
            <button type="button" class="drop" aria-label="配置"><svg><use href="#wrench" /></svg></button>
            <input class="field" type="text" placeholder="过滤器" aria-label="过滤动作" />
          </div>
          <div class="action-view">
            <div class="action-body">
              <table class="action-table">
                <thead><tr><th v-for="c in actionColumns" :key="c">{{ c }}</th></tr></thead>
              </table>
            </div>
            <div class="hscroll">
              <svg><use href="#arrow-left" /></svg>
              <div class="track"><div class="thumb" style="width: 73%"></div></div>
              <svg><use href="#arrow-right" /></svg>
            </div>
          </div>
          <div class="tabs">
            <button v-for="(t, i) in tabs" :key="t" type="button" :class="{ current: i === currentTab }" @click="currentTab = i">{{ t }}</button>
          </div>
        </section>
      </aside>
    </main>

    <footer class="status"></footer>

    <svg class="marks" width="400" height="620" aria-hidden="true">
      <g fill="none" stroke="#ff1408" stroke-width="3">
        <rect x="84.500" y="36.500" width="81" height="31" rx="1" />
        <rect x="85.500" y="523.500" width="291" height="35" rx="1" />
      </g>
      <path d="M40 119L73 82L69 79L83 74L79 89L76 85Z" fill="#ff1408" />
      <path d="M44 601L89 572L86 569L98 569L92 580L91 576Z" fill="#ff1408" />
    </svg>
  </div>
</template>

<style>
html,
body {
  margin: 0;
  height: 100%;
}
</style>

<style scoped>
.app {
  position: relative;
  display: flex;
  flex-direction: column;
  height: 100vh;
  overflow: hidden;
  background: #f0f0f0;
  color: #000;
  font-family: 'Noto Sans', 'Noto Sans CJK SC', sans-serif;
  font-size: 18px;
  line-height: 26px;
  white-space: nowrap;
}
.app *,
.app *::before,
.app *::after {
  box-sizing: border-box;
}
.sprite,
.marks {
  position: absolute;
  top: 0;
  left: 0;
  pointer-events: none;
}
.marks {
  z-index: 20;
}
svg {
  display: block;
  flex: none;
}
button {
  border: 0;
  padding: 0;
  background: none;
  color: inherit;
  font: inherit;
}
h1,
h2,
h3 {
  margin: 0;
  font-size: 18px;
  font-weight: 400;
}
u {
  text-decoration-thickness: 1px;
  text-underline-offset: 2px;
}
table {
  border-collapse: separate;
  border-spacing: 0;
  table-layout: fixed;
  width: 100%;
}
th,
td {
  padding: 0;
  text-align: left;
  font-weight: 400;
}
.field {
  height: 30px;
  border: 1px solid #7a7a7a;
  border-radius: 0;
  padding: 0 4px;
  background: #fff;
  font: inherit;
  outline: 0;
}
.field::placeholder {
  color: #808080;
  opacity: 1;
}

.titlebar {
  display: flex;
  align-items: center;
  height: 34px;
  background: #0078d7;
  color: #fff;
}
.logo {
  width: 20px;
  height: 14px;
  margin: 0 7px 0 4px;
}
.window-buttons {
  display: flex;
  margin: 0 1px 0 auto;
}
.window-buttons button {
  display: grid;
  place-items: center;
  width: 70px;
  height: 34px;
}
.window-buttons svg {
  width: 16px;
  height: 16px;
}

.menubar {
  display: flex;
  gap: 3px;
  height: 33px;
  background: #fff;
  border-bottom: 1px solid #f0f0f0;
}
.menu-slot {
  position: relative;
}
.menu-title {
  height: 32px;
  padding: 0 12px;
}
.menu-title.open {
  background: #cce8ff;
}
.menu {
  position: absolute;
  top: 32px;
  left: 0;
  z-index: 10;
  width: 304px;
  padding: 4px 5px 5px 3px;
  border: 1px solid #b4b4b4;
  background: linear-gradient(90deg, #f2f2f2 39px, #ebebeb 39px, #ebebeb 40px, #f2f2f2 40px);
  box-shadow: 3px 3px 3px #00000070;
}
.menu hr {
  height: 1px;
  margin: 5px 0 8px 37px;
  border: 0;
  background: #d4d4d4;
}
.entry {
  display: flex;
  align-items: center;
  width: 100%;
  height: 34px;
  text-align: left;
}
.entry:disabled {
  color: #6d6d6d;
}
.entry.active {
  background: #91c9f7;
}
.entry-icon {
  display: grid;
  place-items: center;
  width: 31px;
  height: 32px;
  margin-right: 12px;
}
.entry-icon.checked {
  background: #91c9f7;
}
.entry-icon svg {
  width: 24px;
  height: 24px;
}
.entry-text {
  width: 171px;
}

.toolbars {
  display: flex;
  height: 50px;
  border-bottom: 1px solid #b4b4b4;
}
.toolbar {
  display: flex;
  align-items: center;
  gap: 10px;
  padding: 0 5px;
}
.file-tools {
  width: 472px;
  border-right: 2px solid #b4b4b4;
}
.layout-tools {
  padding-left: 6px;
}
.push-right {
  flex: 1;
}
.toolbar button svg {
  width: 36px;
  height: 36px;
}
.handle {
  width: 2px;
  height: 38px;
  margin-right: 3px;
  background: repeating-linear-gradient(#a8a8a8 0 2px, transparent 2px 5px);
}

.workspace {
  display: flex;
  flex: 1;
  min-height: 0;
}
.left {
  display: flex;
  flex-direction: column;
  width: 15%;
  padding: 2px 0 1px;
}
.dock-title {
  display: flex;
  align-items: center;
  gap: 16px;
  flex: none;
  height: 30px;
  padding: 2px 8px 0 7px;
  border: 1px solid #b4b4b4;
  border-left: 0;
  border-bottom-width: 2px;
  background: #d9d9d9;
}
.dock-title h2 {
  flex: 1;
}
.dock-title svg {
  width: 16px;
  height: 16px;
}
.box-filter {
  margin: 7px 3px 3px;
}
.box {
  display: flex;
  flex: 1;
  min-height: 0;
  border: 1px solid #828790;
  background: #fff;
}
.box-list {
  flex: 1;
  min-width: 0;
  overflow: hidden;
}
.box h3 {
  display: flex;
  align-items: center;
  height: 30px;
  margin-right: 2px;
  border: 1px solid #a0a0a0;
  border-width: 1px 0;
  background: linear-gradient(#f5f5f5, #dfdfdf);
}
.box h3 span {
  flex: 1;
  text-align: center;
}
.chev {
  width: 16px;
  height: 16px;
  margin-left: 4px;
  color: #333;
}
.box-item {
  display: flex;
  align-items: center;
  gap: 8px;
  height: 42px;
  padding-left: 7px;
}
.box-item svg {
  width: 33px;
  height: 33px;
}
.box-item span {
  padding-bottom: 2px;
}
.vscroll {
  display: flex;
  flex-direction: column;
  align-items: center;
  width: 25px;
  background: #f0f0f0;
  color: #555;
}
.vscroll svg,
.hscroll svg {
  width: 16px;
  height: 16px;
  margin: 5px;
}
.track {
  flex: 1;
  align-self: stretch;
}
.thumb {
  height: 100%;
  background: #cdcdcd;
}

.mdi {
  flex: 1;
  min-width: 0;
  margin: 1px 6px 1px 7px;
  border: 1px solid #828790;
  border-top-width: 2px;
  background: #a0a0a0;
}
.child {
  width: 615px;
  border: 1px solid #000;
  border-top: 0;
  border-top-left-radius: 6px;
  padding: 0 7px 6px 6px;
  background: linear-gradient(#99b4d1, #d9e6f5 98px, #b9d1ea 98px);
  box-shadow: inset -1px -1px #3cc8e6, inset 1px 0 #fff;
}
.child-title {
  display: flex;
  align-items: center;
  height: 31px;
  margin: 0 -7px 0 -6px;
  padding-left: 6px;
  background: linear-gradient(#99b4d1, #b9d1ea);
  border: 1px solid #fff;
  border-width: 1px 0;
  border-top-color: #000;
}
.qt {
  width: 24px;
  height: 17px;
  margin-top: 8px;
}
.child-name {
  flex: 1;
  padding-top: 4px;
}
.child-min,
.child-close {
  display: grid;
  place-items: center;
  align-self: flex-start;
  width: 48px;
  height: 27px;
  margin-right: 3px;
  border: 1px solid #5f7da3;
  border-radius: 0 0 3px 3px;
  background: linear-gradient(#c5d8ec 50%, #9bb8d6 50%, #b8d0e9);
  box-shadow: inset 0 0 0 1px #ffffff90;
}
.child-close {
  margin-right: 1px;
  border-color: #5a1a1a;
  background: linear-gradient(#dd9d90 45%, #b8321e 45%, #d2664f);
}
.child-min svg,
.child-close svg {
  width: 18px;
  height: 18px;
}
.canvas {
  height: 450px;
  padding: 75px 105px;
  background: conic-gradient(from 270deg at 2px 2px, #a0a0a0 90deg, transparent 0) -1px -1px / 15px 15px #f0f0f0;
}
.grid-layout {
  width: 266px;
  border: 1px solid #f57c7c;
}
.form-layout {
  display: grid;
  grid-template-columns: 90px 1fr;
  gap: 9px 0;
  align-items: center;
  margin: 0 0 4px 1px;
  padding: 2px 0 0 1px;
  border-right: 2px solid #f57c7c;
  border-bottom: 2px solid #f57c7c;
}
.form-layout input {
  width: 100%;
  height: 30px;
  border: 1px solid #7a7a7a;
  background: #fff;
}
.text-label {
  height: 34px;
  padding: 2px;
  border: 1px solid #6fb56f;
  border-width: 1px 0;
}
.form-buttons {
  display: grid;
  grid-template-columns: 133px 1fr;
}
.form-buttons div {
  padding: 6px 0 0 5px;
}
.form-buttons div:first-child {
  padding: 6px 4px 0 2px;
  border-right: 2px solid #6fb56f;
}
.form-buttons button {
  width: 100%;
  height: 34px;
  border: 1px solid #adadad;
  background: #e1e1e1;
}

.right {
  display: flex;
  flex-direction: column;
  width: 30%;
  padding: 2px 0 0 1px;
}
.inspector {
  display: flex;
  flex-direction: column;
  height: 249px;
  margin-bottom: 6px;
}
.object-filter {
  margin: 4px 0 9px;
}
.view {
  display: flex;
  flex: 1;
  min-height: 0;
  border-bottom: 1px solid #828790;
  border-right: 1px solid #828790;
  background: #fff;
}
.view-body {
  flex: 1;
  overflow: hidden;
}
.view th,
.action-table th {
  height: 37px;
  padding: 2px 0 0 7px;
  border-right: 1px solid #e5e5e5;
}
.objects th:first-child {
  position: relative;
}
.sort {
  position: absolute;
  top: 1px;
  left: 49%;
  width: 12px;
  height: 8px;
}
.col-object {
  width: 39%;
}
.objects td {
  height: 30px;
}
.objects .short td {
  height: 27px;
}
.objects tr:nth-child(even) td {
  background: #f5f5f5;
}
.node,
.node-class {
  display: flex;
  align-items: center;
  height: 100%;
}
.indent,
.twist {
  width: 30px;
}
.twist {
  display: grid;
  place-items: center;
  color: #333;
}
.twist svg {
  width: 16px;
  height: 16px;
}
.node-body {
  display: flex;
  align-items: center;
  flex: 1;
  gap: 8px;
  height: 100%;
  padding-left: 6px;
}
.node-body svg,
.node-class svg {
  width: 24px;
  height: 24px;
}
.node-class {
  gap: 7px;
  padding-left: 4px;
}
.selected .node-body,
.selected .node-class {
  height: 30px;
  background: #d9d9d9;
}

.editor {
  display: flex;
  flex-direction: column;
  flex: 1;
  min-height: 0;
  margin-bottom: 7px;
}
.prop-tools {
  display: flex;
  align-items: center;
  gap: 12px;
  height: 54px;
  padding: 4px 10px 0 3px;
}
.prop-tools .field {
  flex: 1;
  margin-right: -6px;
}
.prop-tools svg {
  width: 34px;
  height: 34px;
}
.drop {
  position: relative;
}
.drop::after {
  content: '';
  position: absolute;
  right: -3px;
  bottom: -1px;
  border: 4px solid transparent;
  border-top-color: #000;
  border-bottom: 0;
}
.target {
  height: 28px;
  margin-bottom: 3px;
  padding: 2px 0 0 4px;
  border-bottom: 1px solid #b4b4b4;
}
.col-prop {
  width: 225px;
}
.props td {
  height: 30px;
  border-bottom: 1px solid #d4d4d4;
}
.props td:first-child {
  border-right: 1px solid #d4d4d4;
}
.props .tall td {
  height: 32px;
}
.props .light {
  background: #ffffdc;
}
.props .deep {
  background: #ffffbf;
}
.props .peach {
  background: #fff2df;
}
.props .group {
  background: #a0a0a0;
}
.props .group td {
  color: #fff;
  font-weight: 700;
}
.props .bold {
  font-weight: 700;
}
.prop-name,
.prop-value {
  display: flex;
  align-items: center;
}
.prop-name svg,
.prop-name i {
  width: 16px;
  height: 16px;
  margin: 0 13px 0 7px;
  color: #9a9a80;
}
.props .group svg {
  color: #222;
}
.prop-value {
  padding-left: 6px;
}
.value-icon {
  width: 24px;
  height: 24px;
  margin-right: 9px;
}
.tick {
  display: grid;
}
.tick > * {
  grid-area: 1 / 1;
  width: 19px;
  height: 20px;
}
.tick input {
  appearance: none;
  margin: 0;
  border: 2px solid #333;
  background: #fff;
}
.tick input:not(:checked) + svg {
  visibility: hidden;
}

.actions {
  display: flex;
  flex-direction: column;
  height: 298px;
}
.action-tools {
  display: flex;
  align-items: center;
  gap: 11px;
  height: 52px;
  padding: 2px 2px 0 9px;
}
.action-tools svg {
  width: 32px;
  height: 34px;
}
.action-tools .field {
  width: 36%;
  margin-left: auto;
}
.dim {
  color: #777;
}
.action-view {
  display: flex;
  flex-direction: column;
  flex: 1;
  min-height: 0;
  border-right: 1px solid #828790;
  border-bottom: 2px solid #828790;
  background: #fff;
}
.action-body {
  flex: 1;
  overflow: hidden;
}
.action-table {
  width: 904px;
}
.hscroll {
  display: flex;
  align-items: center;
  height: 26px;
  background: #f0f0f0;
  color: #555;
}
.tabs {
  display: flex;
  align-items: flex-start;
  height: 35px;
  padding-left: 3px;
}
.tabs button {
  height: 31px;
  padding: 0 14px;
  border: 1px solid #d9d9d9;
  border-top: 0;
  border-right: 0;
}
.tabs .current {
  height: 35px;
  padding: 0 20px;
  border-right: 1px solid #d9d9d9;
  background: #fff;
}
.tabs .current + button {
  border-left: 0;
}
.status {
  height: 30px;
}
</style>
